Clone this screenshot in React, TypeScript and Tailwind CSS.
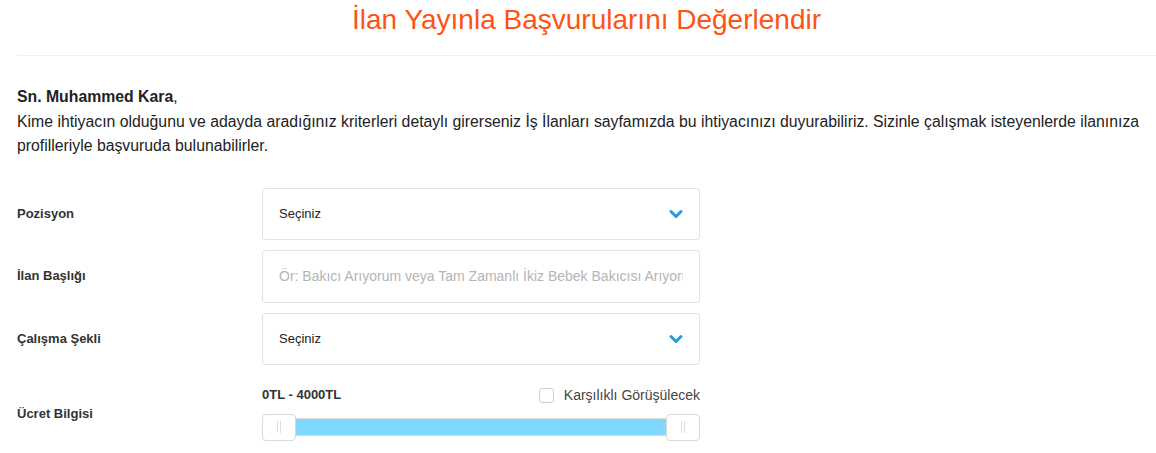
import { useState } from 'react';

function Chevron() {
  return (
    <svg width="14" height="10" viewBox="0 0 14 10" className="text-[#2a98dd]">
      <path d="M2 2.5 L7 7.5 L12 2.5" fill="none" stroke="currentColor" strokeWidth="3" strokeLinecap="round" strokeLinejoin="round" />
    </svg>
  );
}

function SelectBox({ value }: { value: string }) {
  return (
    <div className="flex h-[52px] w-[438px] items-center justify-between rounded-[3px] border border-[#e3e3e3] bg-white pl-4 pr-4 text-[13px] text-[#222]">
      <span>{value}</span>
      <Chevron />
    </div>
  );
}

function Row({ label, children }: { label: string; children: React.ReactNode }) {
  return (
    <div className="flex items-center">
      <div className="w-[245px] text-[13px] font-bold text-[#333]">{label}</div>
      {children}
    </div>
  );
}

function Handle() {
  return (
    <div className="flex h-[27px] w-[34px] items-center justify-center gap-[2px] rounded-[4px] border border-[#d9d9d9] bg-white">
      <span className="h-[12px] w-px bg-[#dedede]" />
      <span className="h-[12px] w-px bg-[#dedede]" />
    </div>
  );
}

export default function App() {
  const [agreed, setAgreed] = useState(false);

  return (
    <div className="min-h-screen overflow-x-hidden bg-white font-['Liberation_Sans',Arial,sans-serif] text-[#222]">
      {/* Header */}
      <div className="pl-[17px]">
        <h1 className="pt-[4px] pb-[19px] text-center text-[28px] leading-[32px] text-[#ff5314]">
          İlan Yayınla Başvurularını Değerlendir
        </h1>
        <div className="h-px bg-[#efefef]" />
      </div>

      <div className="pl-[17px]">
        {/* Intro */}
        <p className="mt-[29px] w-[1139px] text-[15.8px] leading-[24.5px]">
          <b>Sn. Muhammed Kara</b>,
          <br />
          Kime ihtiyacın olduğunu ve adayda aradığınız kriterleri detaylı girerseniz İş İlanları sayfamızda bu ihtiyacınızı duyurabiliriz. Sizinle çalışmak isteyenlerde ilanınıza profilleriyle başvuruda bulunabilirler.
        </p>

        {/* Form */}
        <div className="mt-[29px] flex flex-col gap-[10px]">
          <Row label="Pozisyon">
            <SelectBox value="Seçiniz" />
          </Row>
          <Row label="İlan Başlığı">
            <input
              className="h-[53px] w-[438px] rounded-[3px] border border-[#e3e3e3] px-4 text-[14px] text-[#222] outline-none placeholder:text-[#b5b5b5]"
              placeholder="Ör: Bakıcı Arıyorum veya Tam Zamanlı İkiz Bebek Bakıcısı Arıyorum"
            />
          </Row>
          <Row label="Çalışma Şekli">
            <SelectBox value="Seçiniz" />
          </Row>
          <div className="flex items-end">
            <div className="mb-[17px] w-[245px] text-[13px] font-bold leading-[20px] text-[#333]">Ücret Bilgisi</div>
            <div className="w-[438px] pt-[10px]">
              <div className="flex items-center justify-between">
                <span className="text-[13px] font-bold text-[#333]">0TL - 4000TL</span>
                <label className="flex items-center gap-[10px] text-[14px] text-[#444]">
                  <span
                    onClick={() => setAgreed(!agreed)}
                    className="h-[15px] w-[15px] rounded-[3px] border border-[#cfcfcf] bg-white"
                  />
                  Karşılıklı Görüşülecek
                </label>
              </div>
              <div className="mt-[8px] flex items-center">
                <Handle />
                <div className="h-[18px] flex-1 border-y border-[#dcdcdc] bg-[#80d8fc]" />
                <Handle />
              </div>
            </div>
          </div>
        </div>
      </div>
    </div>
  );
}
